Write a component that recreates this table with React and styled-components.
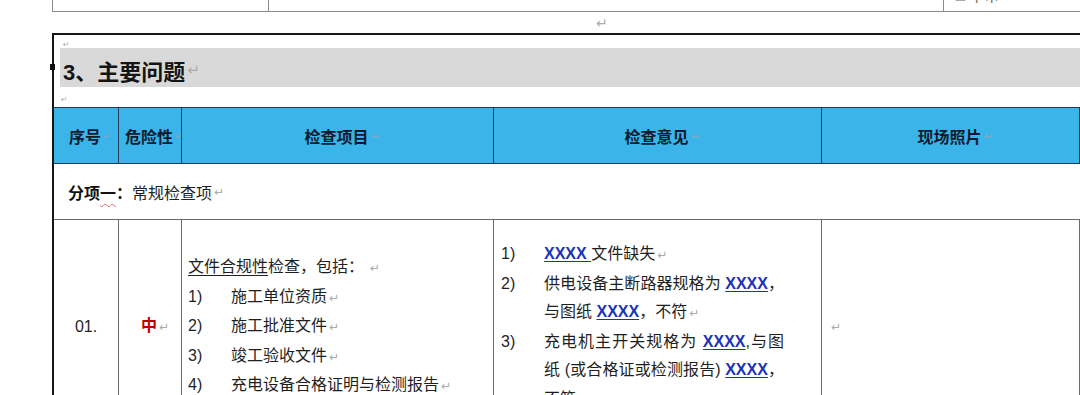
import React from "react";
import styled, { createGlobalStyle } from "styled-components";

const GlobalStyle = createGlobalStyle`
  html, body {
    margin: 0;
    padding: 0;
    background: #fff;
  }
  body {
    font-family: "Liberation Sans", "Noto Sans CJK SC", sans-serif;
  }
`;

const Page = styled.div`
  width: 1080px;
  height: 395px;
  overflow: hidden;
  background: #fff;
  color: #1f1f1f;
  font-family: "Liberation Sans", "Noto Sans CJK SC", sans-serif;
  font-size: 16px;
`;

// paragraph mark, zero width so it never shifts centred text
const Mark = styled.span`
  display: inline-block;
  width: 0;
  padding-left: 2px;
  white-space: nowrap;
  font-family: "DejaVu Sans", sans-serif;
  font-weight: normal;
  font-size: ${(p) => p.$size || 12}px;
  color: ${(p) => p.$color || "#ababab"};
`;

const PrevTable = styled.div`
  margin-left: 52px;
  display: grid;
  grid-template-columns: 216px 675px 1fr;
  height: 12px;
  box-sizing: border-box;
  border-left: 1px solid #8c8c8c;
  border-bottom: 1px solid #8c8c8c;
  overflow: hidden;
`;

const PrevCell = styled.div`
  border-right: ${(p) => (p.$last ? "none" : "1px solid #8c8c8c")};
  padding-left: 12px;
  font-size: 15px;
  line-height: 16px;
  color: #666;
  span.cut {
    display: block;
    margin-top: -12px;
  }
`;

const Gap = styled.div`
  height: 21px;
  line-height: 21px;
  padding-left: ${(p) => p.$indent}px;
`;

const Section = styled.div`
  margin-left: 52px;
  border-top: 2px solid #151515;
  border-left: 2px solid #151515;
`;

const Spacer = styled.div`
  height: ${(p) => p.$h}px;
  line-height: ${(p) => p.$h}px;
  padding-left: ${(p) => p.$indent}px;
`;

const TitleBand = styled.div`
  position: relative;
  margin-left: 6px;
  height: 39px;
  box-sizing: border-box;
  padding: 4px 0 0 3px;
  display: flex;
  align-items: center;
  background: #d9d9d9;
  font-size: 22px;
  font-weight: bold;
  color: #141414;
`;

const Bullet = styled.span`
  position: absolute;
  left: -10px;
  top: 16px;
  width: 5px;
  height: 6px;
  background: #111;
`;

const cols = "65px 63px 312px 328px 1fr";

const HeadRow = styled.div`
  display: grid;
  grid-template-columns: ${cols};
  height: 57px;
  box-sizing: border-box;
  border-top: 1px solid #1f3b57;
  border-bottom: 1px solid #1f3b57;
  background: #3ab4e9;
`;

const HeadCell = styled.div`
  display: flex;
  align-items: center;
  justify-content: center;
  border-right: 1px solid #1f3b57;
  font-size: 16px;
  font-weight: bold;
  color: #0d1b30;
  white-space: nowrap;
`;

const SubRow = styled.div`
  height: 56px;
  box-sizing: border-box;
  border-bottom: 1px solid #6b6b6b;
  display: flex;
  align-items: center;
  padding-left: 14px;
  font-size: 16px;
`;

const Strong = styled.b`
  font-weight: bold;
  color: #111;
`;

const Wavy = styled.span`
  text-decoration: underline wavy #e06a6a;
  text-decoration-thickness: 1px;
  text-underline-offset: 4px;
`;

const DataRow = styled.div`
  display: grid;
  grid-template-columns: ${cols};
  height: 214px;
`;

const DataCell = styled.div`
  display: flex;
  flex-direction: column;
  justify-content: center;
  align-items: ${(p) => (p.$center ? "center" : "stretch")};
  padding-left: ${(p) => p.$pad || 0}px;
  border-right: 1px solid #6b6b6b;
  line-height: 28.5px;
`;

const Level = styled.span`
  color: #c00000;
  font-weight: bold;
`;

const Under = styled.span`
  text-decoration: underline;
  text-underline-offset: 3px;
`;

const ListRow = styled.div`
  display: grid;
  grid-template-columns: 43px ${(p) => (p.$w ? `${p.$w}px` : "1fr")};
`;

const Var = styled.span`
  color: #1c33b8;
  font-weight: bold;
  text-decoration: underline;
  text-underline-offset: 2px;
`;

const Line = styled.span`
  display: block;
  text-align: justify;
  text-align-last: ${(p) => (p.$fill ? "justify" : "auto")};
`;

const headers = [
  ["序号", 9],
  ["危险性", 9],
  ["检查项目", 12],
  ["检查意见", 12],
  ["现场照片", 12],
];

const items = ["施工单位资质", "施工批准文件", "竣工验收文件", "充电设备合格证明与检测报告"];

export default function App() {
  return (
    <Page>
      <GlobalStyle />
      <PrevTable>
        <PrevCell />
        <PrevCell />
        <PrevCell $last>
          <span className="cut">□ 中审</span>
        </PrevCell>
      </PrevTable>
      <Gap $indent={594}>
        <Mark $size={14}>↵</Mark>
      </Gap>

      <Section>
        <Spacer $h={13} $indent={7}>
          <Mark $size={8}>↵</Mark>
        </Spacer>
        <TitleBand>
          <Bullet />
          3、主要问题
          <Mark $size={15}>↵</Mark>
        </TitleBand>
        <Spacer $h={20} $indent={5}>
          <Mark $size={8}>↵</Mark>
        </Spacer>

        <HeadRow>
          {headers.map(([label, size]) => (
            <HeadCell key={label}>
              {label}
              <Mark $size={size} $color="#7fa9c4">↵</Mark>
            </HeadCell>
          ))}
        </HeadRow>

        <SubRow>
          <Strong>
            分项<Wavy>一</Wavy>：
          </Strong>
          常规检查项
          <Mark>↵</Mark>
        </SubRow>

        <DataRow>
          <DataCell $center>01.</DataCell>
          <DataCell $center>
            <span>
              <Level>中</Level>
              <Mark>↵</Mark>
            </span>
          </DataCell>
          <DataCell $pad={6}>
            <div>
              <Under>文件合规性</Under>检查，包括：<Mark>&nbsp;↵</Mark>
            </div>
            {items.map((t, i) => (
              <ListRow key={t}>
                <span>{i + 1})</span>
                <span>
                  {t}
                  <Mark>↵</Mark>
                </span>
              </ListRow>
            ))}
          </DataCell>
          <DataCell $pad={7}>
            <ListRow $w={240}>
              <span>1)</span>
              <Line>
                <Var>XXXX </Var>文件缺失<Mark>↵</Mark>
              </Line>
            </ListRow>
            <ListRow $w={240}>
              <span>2)</span>
              <span>
                <Line $fill>
                  供电设备主断路器规格为 <Var>XXXX</Var>，
                </Line>
                <Line>
                  与图纸 <Var>XXXX</Var>，不符<Mark>↵</Mark>
                </Line>
              </span>
            </ListRow>
            <ListRow $w={240}>
              <span>3)</span>
              <span>
                <Line $fill>
                  充电机主开关规格为 <Var>XXXX</Var>,与图
                </Line>
                <Line $fill>
                  纸 (或合格证或检测报告) <Var>XXXX</Var>，
                </Line>
                <Line>
                  不符<Mark>↵</Mark>
                </Line>
              </span>
            </ListRow>
          </DataCell>
          <DataCell $pad={7}>
            <div>
              <Mark>↵</Mark>
            </div>
          </DataCell>
        </DataRow>
      </Section>
    </Page>
  );
}
